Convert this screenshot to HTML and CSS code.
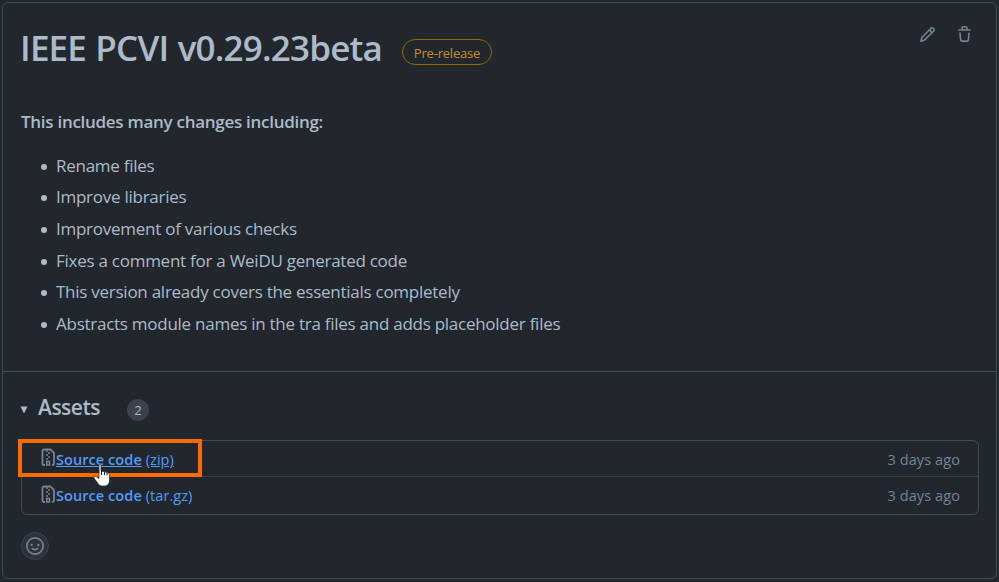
FILE: index.html
```html
<!DOCTYPE html>
<html lang="en">
<head>
<meta charset="utf-8">
<title>IEEE PCVI v0.29.23beta</title>
<link rel="stylesheet" href="styles.css">
</head>
<body>
<main class="release">
  <section class="release-body">
    <header class="release-header">
      <h1 class="title">IEEE PCVI v0.29.23beta</h1>
      <span class="label">Pre-release</span>
      <div class="actions">
        <svg width="17" height="17" viewBox="0 0 16 16"><path fill-rule="evenodd" d="M11.013 1.427a1.75 1.75 0 012.474 0l1.086 1.086a1.75 1.75 0 010 2.474l-8.61 8.61c-.21.21-.47.364-.756.445l-3.251.93a.75.75 0 01-.927-.928l.929-3.25a1.75 1.75 0 01.445-.758l8.61-8.61zm1.414 1.06a.25.25 0 00-.354 0L10.811 3.75l1.439 1.44 1.263-1.263a.25.25 0 000-.354l-1.086-1.086zM11.189 6.25L9.75 4.81l-6.286 6.287a.25.25 0 00-.064.108l-.558 1.953 1.953-.558a.249.249 0 00.108-.064l6.286-6.286z"/></svg>
        <svg width="17" height="17" viewBox="0 0 16 16"><path fill-rule="evenodd" d="M6.5 1.75a.25.25 0 01.25-.25h2.5a.25.25 0 01.25.25V3h-3V1.75zm4.5 0V3h2.25a.75.75 0 010 1.5H2.75a.75.75 0 010-1.5H5V1.75C5 .784 5.784 0 6.75 0h2.5C10.216 0 11 .784 11 1.75zM4.496 6.675a.75.75 0 10-1.492.15l.66 6.6A1.75 1.75 0 005.405 15h5.19c.9 0 1.652-.681 1.741-1.576l.66-6.6a.75.75 0 00-1.492-.149l-.66 6.6a.25.25 0 01-.249.225h-5.19a.25.25 0 01-.249-.225l-.66-6.6z"/></svg>
      </div>
    </header>
    <p class="intro">This includes many changes including:</p>
    <ul class="changes">
      <li><span>Rename files</span></li>
      <li><span>Improve libraries</span></li>
      <li><span>Improvement of various checks</span></li>
      <li><span>Fixes a comment for a WeiDU generated code</span></li>
      <li><span>This version already covers the essentials completely</span></li>
      <li><span>Abstracts module names in the tra files and adds placeholder files</span></li>
    </ul>
  </section>
  <section class="assets">
    <div class="assets-heading">
      <svg class="caret" width="8" height="8" viewBox="0 0 8 8"><path d="M.5.5h7L4 7.5z"/></svg>
      <h2>Assets</h2>
      <span class="counter">2</span>
    </div>
    <div class="asset-list">
      <div class="asset">
        <svg class="zip" width="15" height="19" viewBox="0 0 15 19"><path d="M4 17H3a1.500 1.500 0 0 1-1.500-1.500V3A1.500 1.500 0 0 1 3 1.500h6.500L13 5v10.500A1.500 1.500 0 0 1 11.500 17H11"/><path class="teeth" d="M5 3h2M7 5h2M5 7h2M7 9h2M5 11h2M5.700 17v-3.500h2.800V17z"/></svg>
        <a class="hovered" href="#"><b>Source code</b> <span>(zip)</span></a>
        <time>3 days ago</time>
        <div class="highlight"></div>
        <svg class="pointer" width="18" height="24" viewBox="0 0 18 24"><path d="M6 1.500C6 .6 8 .6 8 1.500V7l2 .5 2.500.5 2.500 1c1 .4 1.500 1 1.500 2v5c0 3.500-2 6-5 6H9c-2 0-3-1-4-2.500L1 14c-.8-1.300.5-2.500 2-1.500l3 2z"/><path class="fingers" d="M8.500 7v4M11.500 8v3M14 9v2.500"/></svg>
      </div>
      <div class="asset">
        <svg class="zip" width="15" height="19" viewBox="0 0 15 19"><path d="M4 17H3a1.500 1.500 0 0 1-1.500-1.500V3A1.500 1.500 0 0 1 3 1.500h6.500L13 5v10.500A1.500 1.500 0 0 1 11.500 17H11"/><path class="teeth" d="M5 3h2M7 5h2M5 7h2M7 9h2M5 11h2M5.700 17v-3.500h2.800V17z"/></svg>
        <a href="#"><b>Source code</b> <span>(tar.gz)</span></a>
        <time>3 days ago</time>
      </div>
    </div>
    <button class="reaction" aria-label="Add reaction">
      <svg width="18" height="18" viewBox="0 0 16 16"><path fill-rule="evenodd" d="M1.500 8a6.500 6.500 0 1113 0 6.500 6.500 0 01-13 0zM8 0a8 8 0 100 16A8 8 0 008 0zM5 8a1 1 0 100-2 1 1 0 000 2zm7-1a1 1 0 11-2 0 1 1 0 012 0zM5.320 9.636a.75.75 0 011.038.175l.007.009c.103.118.22.222.35.31.264.178.683.370 1.285.370.602 0 1.020-.192 1.285-.371.130-.088.247-.192.350-.310l.007-.008a.75.75 0 011.222.870l-.614-.431c.614.430.614.431.613.431v.001l-.001.002-.002.003-.005.007-.014.019a1.984 1.984 0 01-.184.213c-.160.166-.338.316-.530.445-.630.418-1.370.638-2.127.629-.946 0-1.652-.308-2.126-.630a3.320 3.320 0 01-.715-.657l-.014-.020-.005-.006-.002-.003v-.002h-.001l.613-.432-.614.430a.75.75 0 01.183-1.044h.001z"/></svg>
    </button>
  </section>
</main>
</body>
</html>
```
FILE: styles.css
```css
* { box-sizing: border-box; }
body {
  margin: 0;
  padding: 2px;
  background: #22272e;
  color: #adbac7;
  font-family: "Open Sans", sans-serif;
}
.release {
  width: 995px;
  height: 577px;
  border: 1px solid #444c56;
  border-radius: 6px;
}
.release-body {
  height: 369px;
  padding: 0 18px;
  border-bottom: 1px solid #444c56;
}
.release-header {
  display: flex;
  align-items: flex-start;
  height: 110px;
}
.title {
  width: 381px;
  margin: 20px 0 0 -1px;
  font-size: 35px;
  line-height: 50px;
  font-weight: 600;
  letter-spacing: -0.8px;
  word-spacing: 1px;
  white-space: nowrap;
}
.label {
  width: 90px;
  height: 26px;
  margin: 36px 0 0 1px;
  border: 1px solid #966600;
  border-radius: 13px;
  color: #c69026;
  font-size: 13px;
  line-height: 26px;
  letter-spacing: -0.2px;
  text-align: center;
}
.actions {
  display: flex;
  gap: 20px;
  margin: 23px 5px 0 auto;
  fill: #768390;
}
.intro {
  margin: -3px 0 0;
  font-size: 17px;
  line-height: 24px;
  font-weight: 600;
  letter-spacing: -0.28px;
}
.changes {
  margin: 16.5px 0 0;
  padding: 0 0 0 20px;
  list-style: none;
  font-size: 17px;
  letter-spacing: -0.26px;
}
.changes li {
  display: flex;
  align-items: center;
  height: 31.6px;
}
.changes li span { margin-top: -2px; }
.changes li::before {
  content: "";
  width: 6px;
  height: 6px;
  margin: 1px 9px 0 0;
  border-radius: 50%;
  background: #adbac7;
}
.assets { padding: 19px 17px 0 18px; }
.assets-heading {
  display: flex;
  align-items: center;
  height: 32px;
}
.caret { margin: 6px 10px 0 -1px; fill: #adbac7; }
.assets h2 {
  width: 90px;
  margin: 0;
  font-size: 21px;
  line-height: 32px;
  font-weight: 600;
  letter-spacing: -0.5px;
}
.counter {
  width: 22px;
  height: 22px;
  margin: 6px 0 0 -1px;
  border-radius: 50%;
  background: #3b424b;
  font-size: 13px;
  line-height: 22px;
  text-align: center;
}
.asset-list {
  height: 75px;
  margin-top: 17px;
  border: 1px solid #444c56;
  border-radius: 6px;
}
.asset {
  position: relative;
  display: flex;
  align-items: center;
  height: 35px;
  padding: 0 18px;
  font-size: 14.5px;
}
.zip {
  margin-top: -2px;
  margin-left: 1px;
  fill: none;
  stroke: #768390;
  stroke-width: 1.8;
}
.zip .teeth { stroke-width: 1.5; }
.asset a {
  margin-top: 2px;
  color: #539bf5;
  text-decoration: none;
  letter-spacing: 0.07px;
  white-space: pre;
}
.asset a b { font-weight: 600; }
.asset a.hovered b, .asset a.hovered span { text-decoration: underline; }
.asset time {
  margin: 2px 0 0 auto;
  color: #768390;
  letter-spacing: 0.1px;
}
.asset + .asset { height: 38px; border-top: 1px solid #373e47; }
.asset + .asset a, .asset + .asset time { margin-top: -1px; }
.highlight {
  position: absolute;
  left: -4px;
  top: -2px;
  width: 184px;
  height: 38px;
  border: 4px solid #ff6a00;
  z-index: 1;
}
.pointer {
  position: absolute;
  left: 71px;
  top: 23px;
  z-index: 2;
  fill: #fff;
  stroke: #22272e;
  stroke-width: 0.7;
}
.pointer .fingers { fill: none; stroke-width: 1; }
.reaction {
  display: flex;
  align-items: center;
  justify-content: center;
  width: 28px;
  height: 28px;
  margin-top: 17px;
  padding: 0;
  border: 1px solid #3b424b;
  border-radius: 50%;
  background: #2d333b;
  fill: #768390;
}
```
